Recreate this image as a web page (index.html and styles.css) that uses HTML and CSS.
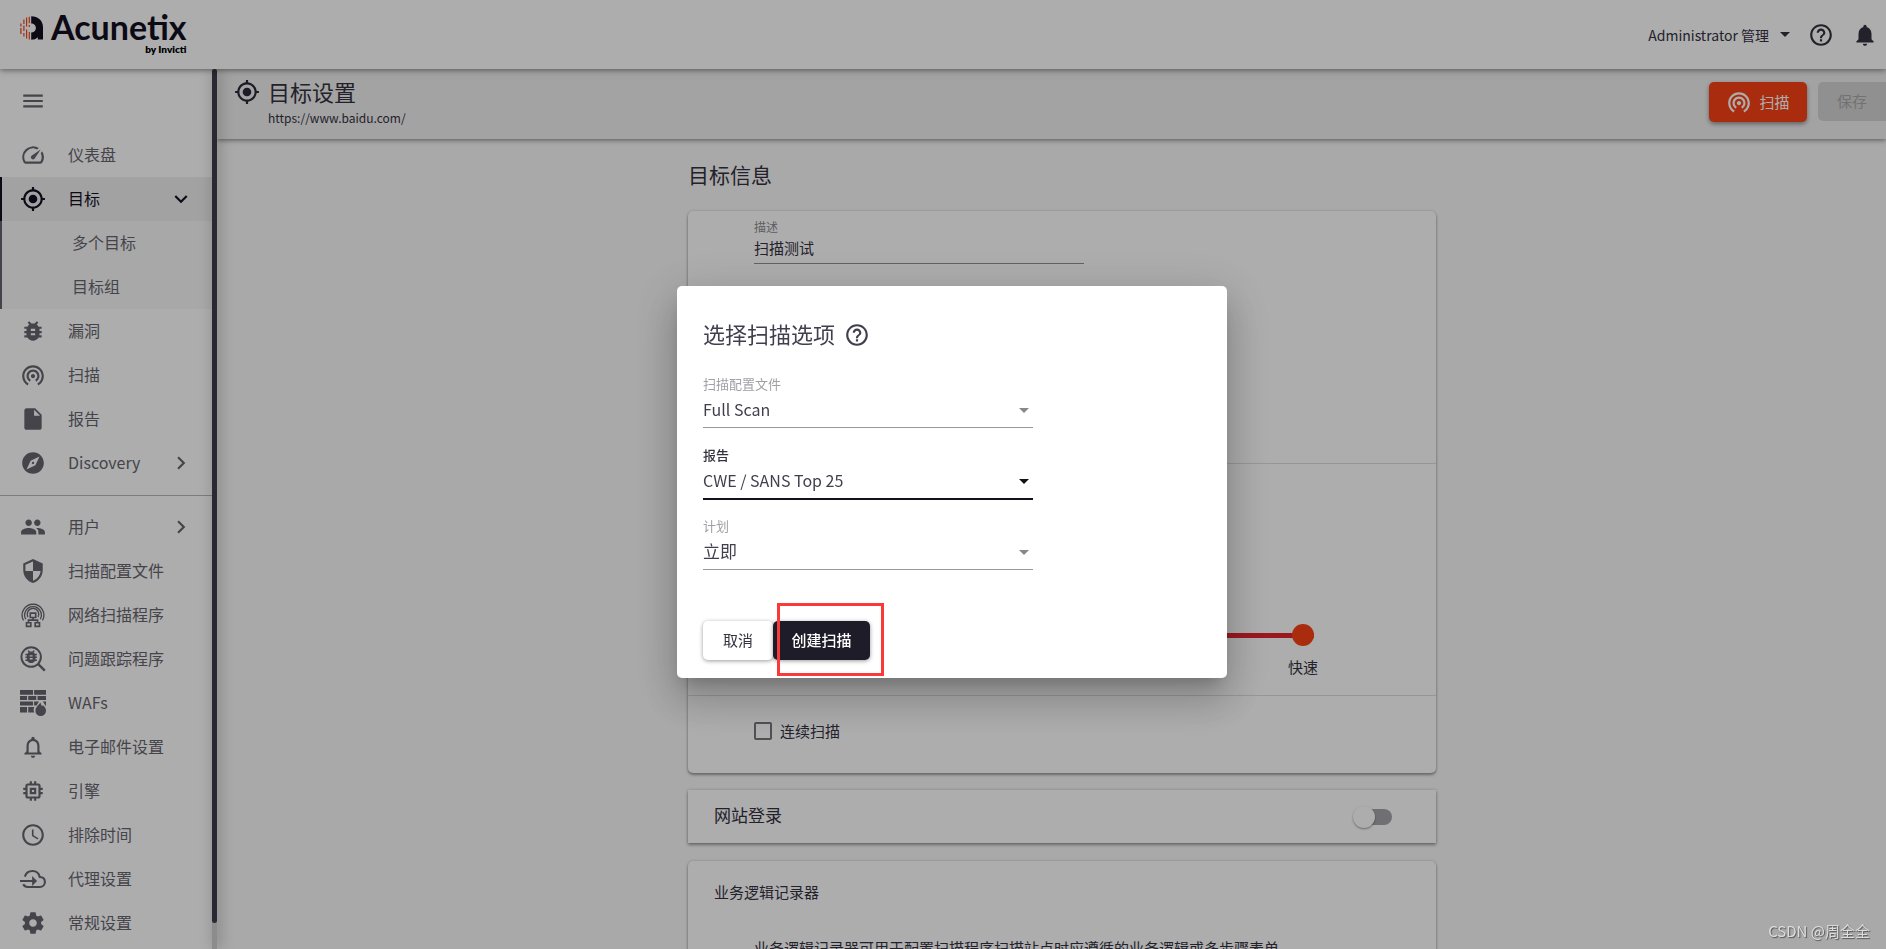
FILE: index.html
```html
<!DOCTYPE html>
<html lang="zh-CN">
<head>
<meta charset="utf-8">
<meta name="viewport" content="width=device-width, initial-scale=1">
<title>Acunetix - 目标设置</title>
<link rel="stylesheet" href="styles.css">
</head>
<body>
<svg class="sprite" aria-hidden="true">
  <symbol id="i-target" viewBox="0 0 24 24"><path d="M12 8c-2.21 0-4 1.79-4 4s1.79 4 4 4 4-1.79 4-4-1.79-4-4-4zm8.94 3c-.46-4.17-3.77-7.48-7.94-7.94V1h-2v2.06C6.83 3.52 3.52 6.83 3.06 11H1v2h2.06c.46 4.17 3.77 7.48 7.94 7.94V23h2v-2.06c4.17-.46 7.48-3.77 7.94-7.94H23v-2h-2.06zM12 19c-3.87 0-7-3.13-7-7s3.13-7 7-7 7 3.13 7 7-3.13 7-7 7z"/></symbol>
  <symbol id="i-scan" viewBox="0 0 24 24"><path d="M12 11c-1.1 0-2 .9-2 2s.9 2 2 2 2-.9 2-2-.9-2-2-2zm6 2c0-3.31-2.69-6-6-6s-6 2.69-6 6c0 2.22 1.21 4.15 3 5.19l1-1.74c-1.19-.7-2-1.97-2-3.45 0-2.21 1.79-4 4-4s4 1.79 4 4c0 1.48-.81 2.75-2 3.45l1 1.74c1.79-1.04 3-2.97 3-5.19zM12 3C6.48 3 2 7.48 2 13c0 3.7 2.01 6.92 4.99 8.65l1-1.73C5.61 18.53 4 15.96 4 13c0-4.42 3.58-8 8-8s8 3.58 8 8c0 2.96-1.61 5.53-4 6.92l1 1.73c2.99-1.73 5-4.95 5-8.65 0-5.52-4.48-10-10-10z"/></symbol>
  <symbol id="i-bug" viewBox="0 0 24 24"><path d="M20 8h-2.81c-.45-.78-1.07-1.45-1.82-1.96L17 4.41 15.59 3l-2.17 2.17C12.96 5.06 12.49 5 12 5c-.49 0-.96.06-1.41.17L8.41 3 7 4.41l1.62 1.63C7.88 6.55 7.26 7.22 6.81 8H4v2h2.09c-.05.33-.09.66-.09 1v1H4v2h2v1c0 .34.04.67.09 1H4v2h2.81c1.04 1.79 2.97 3 5.19 3s4.15-1.21 5.19-3H20v-2h-2.09c.05-.33.09-.66.09-1v-1h2v-2h-2v-1c0-.34-.04-.67-.09-1H20V8zm-6 8h-4v-2h4v2zm0-4h-4v-2h4v2z"/></symbol>
  <symbol id="i-help" viewBox="0 0 24 24"><path d="M11 18h2v-2h-2v2zm1-16C6.48 2 2 6.48 2 12s4.48 10 10 10 10-4.48 10-10S17.52 2 12 2zm0 18c-4.41 0-8-3.59-8-8s3.59-8 8-8 8 3.59 8 8-3.59 8-8 8zm0-14c-2.21 0-4 1.79-4 4h2c0-1.1.9-2 2-2s2 .9 2 2c0 2-3 1.75-3 5h2c0-2.25 3-2.5 3-5 0-2.21-1.79-4-4-4z"/></symbol>
  <symbol id="i-right" viewBox="0 0 24 24"><path d="M8.59 16.59 10 18l6-6-6-6-1.41 1.41L13.17 12z"/></symbol>
  <symbol id="i-down" viewBox="0 0 24 24"><path d="M7.41 8.59 12 13.17l4.59-4.58L18 10l-6 6-6-6z"/></symbol>
</svg>

<div class="app">
  <header class="topbar">
    <a class="brand" href="#" aria-label="Acunetix by Invicti">
      <svg class="brand-mark" viewBox="0 0 24 24" aria-hidden="true">
        <g stroke="#f0471c" stroke-width="1.2" fill="none">
          <path d="M.9 7.5v3M.9 12v6M3.9 3.5v4.5M3.9 9.5v5.5M3.9 17v3.5M6.6 1.5v9M6.6 13.5v9M9.3.8v6.5M9.3 9v2M9.3 16v7.5"/>
        </g>
        <path fill="#13101f" d="M11.2.3C18 .3 23 4.8 23 11v12.500h-5.200v-2.200c-1.600 1.700-3.800 2.500-6.600 2.500v-7.300c2.700 0 4.700-2 4.700-4.500s-2-4.600-4.700-4.600z"/>
      </svg>
      <span class="brand-text">
        <span class="brand-name">Acunetix</span>
        <span class="brand-by">by Invicti</span>
      </span>
    </a>
    <div class="topbar-tools">
      <button class="user-menu" type="button">Administrator 管理<span class="caret"></span></button>
      <button class="icon-button" type="button" aria-label="帮助"><svg class="icon"><use href="#i-help"/></svg></button>
      <button class="icon-button" type="button" aria-label="通知"><svg class="icon" viewBox="0 0 24 24"><path d="M12 22c1.100 0 2-.9 2-2h-4c0 1.100.890 2 2 2zm6-6v-5c0-3.070-1.640-5.640-4.500-6.320V4c0-.83-.67-1.500-1.500-1.500s-1.500.67-1.500 1.500v.68C7.630 5.360 6 7.920 6 11v5l-2 2v1h16v-1l-2-2z"/></svg></button>
    </div>
  </header>

  <div class="body">
    <nav class="sidebar" aria-label="主导航">
      <button class="menu-toggle" type="button" aria-label="菜单"><svg class="icon" viewBox="0 0 24 24"><path d="M3 18h18v-2H3v2zm0-5h18v-2H3v2zm0-7v2h18V6H3z"/></svg></button>
      <a class="nav-item" href="#"><svg class="icon" viewBox="0 0 24 24"><path d="M20.380 8.570l-1.230 1.850a8 8 0 0 1-.22 7.580H5.070A8 8 0 0 1 15.580 6.850l1.850-1.230A10 10 0 0 0 3.350 19a2 2 0 0 0 1.720 1h13.850a2 2 0 0 0 1.740-1 10 10 0 0 0-.27-10.440zM10.590 15.410a2 2 0 0 0 2.830 0l5.660-8.490-8.490 5.660a2 2 0 0 0 0 2.830z"/></svg><span class="nav-label">仪表盘</span></a>
      <a class="nav-item is-active" href="#"><svg class="icon"><use href="#i-target"/></svg><span class="nav-label">目标</span><svg class="chevron"><use href="#i-down"/></svg></a>
      <div class="subnav">
        <a class="subnav-item" href="#">多个目标</a>
        <a class="subnav-item" href="#">目标组</a>
      </div>
      <a class="nav-item" href="#"><svg class="icon"><use href="#i-bug"/></svg><span class="nav-label">漏洞</span></a>
      <a class="nav-item" href="#"><svg class="icon"><use href="#i-scan"/></svg><span class="nav-label">扫描</span></a>
      <a class="nav-item" href="#"><svg class="icon" viewBox="0 0 24 24"><path d="M6 2c-1.100 0-1.990.9-1.990 2L4 20c0 1.100.890 2 1.990 2H18c1.100 0 2-.9 2-2V8l-6-6H6zm7 7V3.500L18.500 9H13z"/></svg><span class="nav-label">报告</span></a>
      <a class="nav-item" href="#"><svg class="icon" viewBox="0 0 24 24"><path d="M12 10.900c-.61 0-1.100.49-1.100 1.100s.49 1.100 1.100 1.100c.61 0 1.100-.49 1.100-1.100s-.49-1.100-1.100-1.100zM12 2C6.480 2 2 6.480 2 12s4.480 10 10 10 10-4.480 10-10S17.520 2 12 2zm2.190 12.190L6 18l3.810-8.190L18 6l-3.810 8.190z"/></svg><span class="nav-label">Discovery</span><svg class="chevron"><use href="#i-right"/></svg></a>
      <hr class="nav-rule">
      <a class="nav-item" href="#"><svg class="icon" viewBox="0 0 24 24"><path d="M16 11c1.660 0 2.990-1.340 2.990-3S17.660 5 16 5c-1.660 0-3 1.340-3 3s1.340 3 3 3zm-8 0c1.660 0 2.990-1.340 2.990-3S9.660 5 8 5C6.340 5 5 6.340 5 8s1.340 3 3 3zm0 2c-2.330 0-7 1.170-7 3.500V19h14v-2.500c0-2.330-4.670-3.500-7-3.500zm8 0c-.29 0-.62.020-.97.050 1.160.840 1.970 1.970 1.970 3.450V19h6v-2.500c0-2.330-4.670-3.500-7-3.500z"/></svg><span class="nav-label">用户</span><svg class="chevron"><use href="#i-right"/></svg></a>
      <a class="nav-item" href="#"><svg class="icon" viewBox="0 0 24 24"><path d="M12 1L3 5v6c0 5.550 3.840 10.740 9 12 5.160-1.260 9-6.450 9-12V5l-9-4zm0 10.990h7c-.53 4.120-3.280 7.790-7 8.940V12H5V6.300l7-3.110v8.800z"/></svg><span class="nav-label">扫描配置文件</span></a>
      <a class="nav-item" href="#"><svg class="icon" viewBox="0 0 24 24"><g fill="none" stroke="currentColor" stroke-width="1.200"><path d="M3.300 17A10 10 0 1 1 20.700 17M5.300 15.800A7.700 7.700 0 1 1 18.700 15.800M7.300 14A5.400 5.400 0 1 1 16.700 14" /><path d="M9.500 10.300h5v4h-5zM12 14.300v2.400M7.800 19v-2.300h8.400V19M6 19.200h4v3.300H6zM14 19.200h4v3.300h-4z" stroke-width="1.500"/></g></svg><span class="nav-label">网络扫描程序</span></a>
      <a class="nav-item" href="#"><svg class="icon" viewBox="0 0 24 24"><g fill="none" stroke="currentColor" stroke-width="1.800"><circle cx="10.300" cy="10.200" r="9"/><path d="M16.600 16.500l6.300 6.300" stroke-width="2.200"/></g><use href="#i-bug" x="2.300" y="1.800" width="16" height="16"/></svg><span class="nav-label">问题跟踪程序</span></a>
      <a class="nav-item" href="#"><svg class="icon" viewBox="0 0 24 24"><path d="M0 0h12v4.300H0zM13 0h11v4.300H13zM0 5.600h6.500v3.700H0zM7.600 5.600h7.400v3.700H7.600zM16.200 5.600h7.800v3.700h-7.800zM0 10.700h12v3.700H0zM13 10.700h4.500l-2.200 3.700H13zM21 10.700h3v4.300zM0 15.800h6.500v5H0zM7.600 15.800h5.600c-.8 1.800-.8 3.400 0 5H7.600zM19 11.500c.3 2 .9 2.900 1.400 3.400.3-.3.500-.7.500-1.100 1.800 1.500 3.100 3 3.100 5.300a4.900 4.900 0 0 1-9.800 0c0-2.800 2-4.600 4.800-7.600z"/></svg><span class="nav-label">WAFs</span></a>
      <a class="nav-item" href="#"><svg class="icon" viewBox="0 0 24 24"><path d="M12 22c1.100 0 2-.9 2-2h-4c0 1.100.9 2 2 2zm6-6v-5c0-3.070-1.630-5.640-4.500-6.320V4c0-.83-.67-1.500-1.500-1.500s-1.500.67-1.500 1.500v.68C7.640 5.360 6 7.920 6 11v5l-2 2v1h16v-1l-2-2zm-2 1H8v-6c0-2.480 1.510-4.500 4-4.500s4 2.020 4 4.500v6z"/></svg><span class="nav-label">电子邮件设置</span></a>
      <a class="nav-item" href="#"><svg class="icon" viewBox="0 0 24 24"><path d="M15 9H9v6h6V9zm-2 4h-2v-2h2v2zm8-2V9h-2V7c0-1.100-.9-2-2-2h-2V3h-2v2h-2V3H9v2H7c-1.100 0-2 .9-2 2v2H3v2h2v2H3v2h2v2c0 1.100.9 2 2 2h2v2h2v-2h2v2h2v-2h2c1.100 0 2-.9 2-2v-2h2v-2h-2v-2h2zm-4 6H7V7h10v10z"/></svg><span class="nav-label">引擎</span></a>
      <a class="nav-item" href="#"><svg class="icon" viewBox="0 0 24 24"><path d="M11.990 2C6.470 2 2 6.480 2 12s4.470 10 9.990 10C17.520 22 22 17.520 22 12S17.520 2 11.990 2zM12 20c-4.420 0-8-3.580-8-8s3.580-8 8-8 8 3.580 8 8-3.580 8-8 8zm.5-13H11v6l5.250 3.150.75-1.230-4.500-2.670z"/></svg><span class="nav-label">排除时间</span></a>
      <a class="nav-item" href="#"><svg class="icon" viewBox="0 0 24 24"><path fill="none" stroke="currentColor" stroke-width="1.900" d="M4.500 9.800C5.500 6.500 8.500 4.700 11.500 4.700c3.500 0 6 2.200 6.700 5.500 2.900.1 4.800 2 4.800 4.600s-2 4.600-4.700 4.600H7c-1.800 0-3.200-.9-4-2.500"/><path d="M0 12.900h11.200V9.300l4.500 4.600-4.500 4.600v-3.700H0z"/></svg><span class="nav-label">代理设置</span></a>
      <a class="nav-item" href="#"><svg class="icon" viewBox="0 0 24 24"><path d="M19.430 12.980c.04-.32.070-.64.070-.98s-.03-.66-.07-.98l2.110-1.650c.19-.15.240-.42.120-.64l-2-3.460c-.12-.22-.39-.3-.61-.22l-2.490 1c-.52-.4-1.080-.73-1.690-.98l-.38-2.650C14.460 2.180 14.250 2 14 2h-4c-.25 0-.46.180-.49.420l-.38 2.650c-.61.250-1.170.590-1.690.98l-2.490-1c-.23-.09-.49 0-.61.220l-2 3.460c-.13.220-.07.490.12.640l2.110 1.650c-.04.320-.07.650-.07.980s.03.660.070.980l-2.110 1.650c-.19.150-.24.420-.12.640l2 3.460c.12.220.39.300.61.220l2.490-1c.52.400 1.080.730 1.690.98l.38 2.650c.03.240.24.420.49.420h4c.25 0 .46-.18.49-.42l.38-2.650c.61-.25 1.170-.59 1.690-.98l2.490 1c.23.090.49 0 .61-.22l2-3.460c.12-.22.070-.49-.12-.64l-2.110-1.650zM12 15.500c-1.930 0-3.500-1.570-3.500-3.500s1.570-3.500 3.500-3.500 3.500 1.570 3.500 3.500-1.570 3.500-3.500 3.500z"/></svg><span class="nav-label">常规设置</span></a>
    </nav>
    <div class="scrollbar" aria-hidden="true"><div class="scroll-thumb"></div></div>

    <main class="content">
      <div class="page-head">
        <svg class="page-icon"><use href="#i-target"/></svg>
        <div class="page-titles">
          <h1 class="page-title">目标设置</h1>
          <span class="page-url">https://www.baidu.com/</span>
        </div>
        <button class="btn btn-scan" type="button"><svg class="icon"><use href="#i-scan"/></svg>扫描</button>
        <button class="btn btn-save" type="button" disabled>保存</button>
      </div>

      <div class="page-scroll">
        <div class="column">
          <h2 class="section-title">目标信息</h2>
          <section class="card">
            <div class="card-part part-info">
              <label class="text-label" for="desc">描述</label>
              <input class="text-input" id="desc" type="text" value="扫描测试">
            </div>
            <div class="card-part part-speed">
              <input class="slider" type="range" min="0" max="3" value="3" aria-label="扫描速度">
              <span class="slider-label">快速</span>
            </div>
            <div class="card-part part-check">
              <label class="check-label"><input class="check" type="checkbox">连续扫描</label>
            </div>
          </section>
          <section class="card card-login">
            <label class="login-title" for="login">网站登录</label>
            <input class="switch" id="login" type="checkbox" role="switch">
          </section>
          <section class="card card-logic">
            <h3 class="logic-title">业务逻辑记录器</h3>
            <p class="logic-text">业务逻辑记录器可用于配置扫描程序扫描站点时应遵循的业务逻辑或多步骤表单</p>
          </section>
        </div>
      </div>
    </main>
  </div>
</div>

<div class="backdrop">
  <form class="dialog" role="dialog" aria-labelledby="dialog-title">
    <div class="dialog-head">
      <h2 class="dialog-title" id="dialog-title">选择扫描选项</h2>
      <svg class="icon"><use href="#i-help"/></svg>
    </div>
    <div class="field">
      <label class="field-label" for="profile">扫描配置文件</label>
      <div class="select-box"><select class="select" id="profile"><option>Full Scan</option></select></div>
    </div>
    <div class="field is-focused">
      <label class="field-label" for="report">报告</label>
      <div class="select-box"><select class="select" id="report"><option>CWE / SANS Top 25</option></select></div>
    </div>
    <div class="field">
      <label class="field-label" for="plan">计划</label>
      <div class="select-box"><select class="select select-cjk" id="plan"><option>立即</option></select></div>
    </div>
    <div class="dialog-actions">
      <button class="btn btn-cancel" type="button">取消</button>
      <div class="create-wrap">
        <button class="btn btn-create" type="button">创建扫描</button>
        <span class="marker" aria-hidden="true"></span>
      </div>
    </div>
  </form>
</div>
<div class="watermark">CSDN @周全全</div>
</body>
</html>
```
FILE: styles.css
```css
* { box-sizing: border-box; }

body {
  margin: 0;
  font-family: "Noto Sans CJK SC", "Noto Sans", sans-serif;
  font-size: 15px;
  line-height: 22px;
  color: #34323f;
  background: #fff;
  overflow: hidden;
}

button, input, select { font: inherit; color: inherit; }
button { border: 0; background: none; padding: 0; cursor: pointer; }
a { color: inherit; text-decoration: none; }
h1, h2, h3, p { margin: 0; font-weight: 400; }

.sprite { position: absolute; width: 0; height: 0; }
.icon { width: 26px; height: 26px; fill: currentColor; flex: none; overflow: visible; }

.app { display: flex; flex-direction: column; height: 100vh; }

/* Top bar */
.topbar {
  display: flex;
  align-items: flex-start;
  justify-content: space-between;
  flex: none;
  height: 69px;
  padding: 0 8px 0 20px;
  background: #fff;
  box-shadow: 0 1px 6px rgba(0, 0, 0, .5);
  z-index: 3;
}
.brand { display: flex; gap: 7px; padding-top: 10px; color: #13101f; }
.brand-mark { width: 24px; height: 24px; margin-top: 6px; }
.brand-text { display: flex; flex-direction: column; align-items: flex-end; font-family: Lato, "Open Sans", sans-serif; }
.brand-name { font-size: 34px; font-weight: 700; line-height: 34px; }
.brand-by { font-size: 10px; font-weight: 800; line-height: 10px; color: #000; }
.topbar-tools { display: flex; align-items: center; height: 69px; gap: 18px; }
.user-menu { display: flex; align-items: center; gap: 11px; font-size: 14px; }
.caret { width: 0; height: 0; border: 5px solid transparent; border-top-color: currentColor; border-bottom: 0; }
.icon-button { display: flex; }

/* Side navigation */
.body { display: flex; flex: 1; min-height: 0; }
.sidebar { width: 212px; flex: none; overflow: hidden; color: #67656f; font-size: 16px; }
.menu-toggle { display: flex; align-items: center; height: 64px; padding-left: 20px; }
.nav-item { display: flex; align-items: center; height: 44px; padding: 0 18px 0 20px; gap: 22px; }
.nav-label { flex: 1; padding-bottom: 2px; }
.chevron { width: 26px; height: 26px; fill: currentColor; }
.is-active { color: #13101f; background: #efefef; box-shadow: inset 2px 0 #13101f; }
.subnav { background: #f8f8f8; box-shadow: inset 2px 0 #67656f; }
.subnav-item { display: flex; align-items: center; height: 44px; padding: 0 0 2px 72px; }
.nav-rule { height: 1px; margin: 10px 0 9px; border: 0; background: #b8b8b8; }
.scrollbar { width: 5px; flex: none; background: #cfcfcf; padding-bottom: 26px; z-index: 2; box-shadow: 2px 0 14px rgba(0, 0, 0, .35); }
.scroll-thumb { height: 100%; border-radius: 3px; background: #3f3c4c; }

/* Page */
.content { display: flex; flex-direction: column; flex: 1; min-width: 0; background: #f9f9f9; }
.page-head {
  display: flex;
  align-items: flex-start;
  flex: none;
  height: 70px;
  padding: 10px 0 0 17px;
  background: #f0f0f0;
  box-shadow: 0 1px 5px rgba(0, 0, 0, .5);
  z-index: 1;
}
.page-icon { width: 26px; height: 26px; margin-right: 8px; fill: #2b2937; }
.page-titles { display: flex; flex-direction: column; flex: 1; }
.page-title { font-size: 22px; line-height: 24px; }
.page-url { font-size: 12px; line-height: 16px; margin-top: 7px; }
.btn { display: flex; align-items: center; justify-content: center; height: 39px; padding-bottom: 2px; border-radius: 5px; }
.page-head .btn { margin-top: 3px; }
.btn-scan { height: 40px; width: 98px; padding-bottom: 0; gap: 7px; margin-right: 11px; color: #fff; background: #fa4217; box-shadow: 0 2px 4px rgba(0, 0, 0, .4); }
.btn-save { width: 68px; border-radius: 5px 0 0 5px; color: #a9a9a9; background: #d4d4d4; }

.page-scroll { flex: 1; min-height: 0; overflow: hidden; padding-left: 21px; }
.column { width: 748px; margin: 0 auto; padding-top: 22px; }
.section-title { font-size: 21px; line-height: 26px; margin-bottom: 24px; }
.card { background: #fff; border-radius: 5px; box-shadow: 0 2px 3px rgba(0, 0, 0, .35), 0 0 3px rgba(0, 0, 0, .18); }
.card-part + .card-part { border-top: 1px solid #dedede; }
.part-info { display: flex; flex-direction: column; height: 252px; padding: 8px 66px; }
.text-label { font-size: 12px; line-height: 16px; color: #8d8c92; }
.text-input { width: 330px; height: 29px; padding: 0 0 4px; border: 0; border-bottom: 1px solid #8f8e94; background: none; outline: 0; }
.part-speed { display: flex; flex-direction: column; height: 232px; padding: 160px 122px 0 66px; }
.slider { appearance: none; width: 100%; height: 22px; margin: 0; background: linear-gradient(#e5242f, #e5242f) center / 100% 5px no-repeat; }
.slider::-webkit-slider-thumb { appearance: none; width: 22px; height: 22px; border-radius: 50%; background: #fa4217; }
.slider-label { align-self: flex-end; margin: 10px -4px 0 0; }
.part-check { height: 78px; padding: 24px 66px; }
.check-label { display: inline-flex; align-items: center; gap: 8px; }
.check { appearance: none; width: 18px; height: 18px; margin: 0; border: 2px solid #77767d; border-radius: 2px; }

.card-login { display: flex; align-items: center; justify-content: space-between; height: 53px; margin: 17px 0 18px; padding: 0 44px 0 26px; border-radius: 0; }
.login-title { font-size: 17px; line-height: 24px; padding-bottom: 4px; }
.switch { position: relative; appearance: none; width: 34px; height: 16px; margin: 0; border-radius: 8px; background: #a5a4aa; }
.switch::before { content: ""; position: absolute; left: -5px; top: -3px; width: 22px; height: 22px; border-radius: 50%; background: #fff; box-shadow: 0 1px 2px rgba(0, 0, 0, .4); }
.card-logic { padding: 20px 26px 80px; }
.logic-title { font-size: 15px; line-height: 22px; }
.logic-text { padding: 34px 40px 0; }

/* Dialog */
.backdrop {
  position: fixed;
  inset: 0;
  z-index: 10;
  display: flex;
  align-items: center;
  justify-content: center;
  padding: 15px 0 0 18px;
  background: rgba(0, 0, 0, .32);
}
.dialog {
  width: 550px;
  padding: 34px 26px 18px;
  border-radius: 5px;
  background: #fff;
  box-shadow: 0 11px 15px -7px rgba(0, 0, 0, .2), 0 24px 38px 3px rgba(0, 0, 0, .14), 0 9px 46px 8px rgba(0, 0, 0, .12);
}
.dialog-head { display: flex; align-items: center; gap: 9px; height: 30px; margin-bottom: 25px; color: #413f4d; }
.dialog-title { font-size: 22px; line-height: 30px; padding-bottom: 4px; }
.field { width: 330px; height: 71px; color: #413f4d; }
.field-label { display: block; font-size: 13px; line-height: 18px; color: #a09fa5; }
.select-box { position: relative; }
.select-box::after { content: ""; position: absolute; right: 4px; top: 15px; border: 5px solid transparent; border-top-color: #88878e; border-bottom: 0; pointer-events: none; }
.select { appearance: none; width: 100%; height: 35px; padding: 0 24px 2px 0; border: 0; border-bottom: 1px solid #98979d; border-radius: 0; background: none; outline: 0; font-size: 16px; }
.select-cjk { font-size: 17px; }
.is-focused .field-label { color: #34323f; font-weight: 500; }
.is-focused .select { height: 36px; border-bottom: 2px solid #13101f; }
.is-focused .select-box::after { border-top-color: #13101f; }
.dialog-actions { display: flex; margin-top: 33px; }
.btn-cancel { width: 70px; background: #fff; box-shadow: 0 1px 4px rgba(0, 0, 0, .4); }
.create-wrap { position: relative; }
.btn-create { width: 97px; color: #fff; background: #1e1c28; box-shadow: 0 1px 4px rgba(0, 0, 0, .4); font-weight: 500; }
.marker { position: absolute; left: 4px; top: -18px; width: 107px; height: 73px; border: 3px solid #fb3939; pointer-events: none; }

.watermark { position: fixed; right: 16px; bottom: 7px; z-index: 11; color: #dcdcdc; text-shadow: 1px 1px 1px #555; }
```
